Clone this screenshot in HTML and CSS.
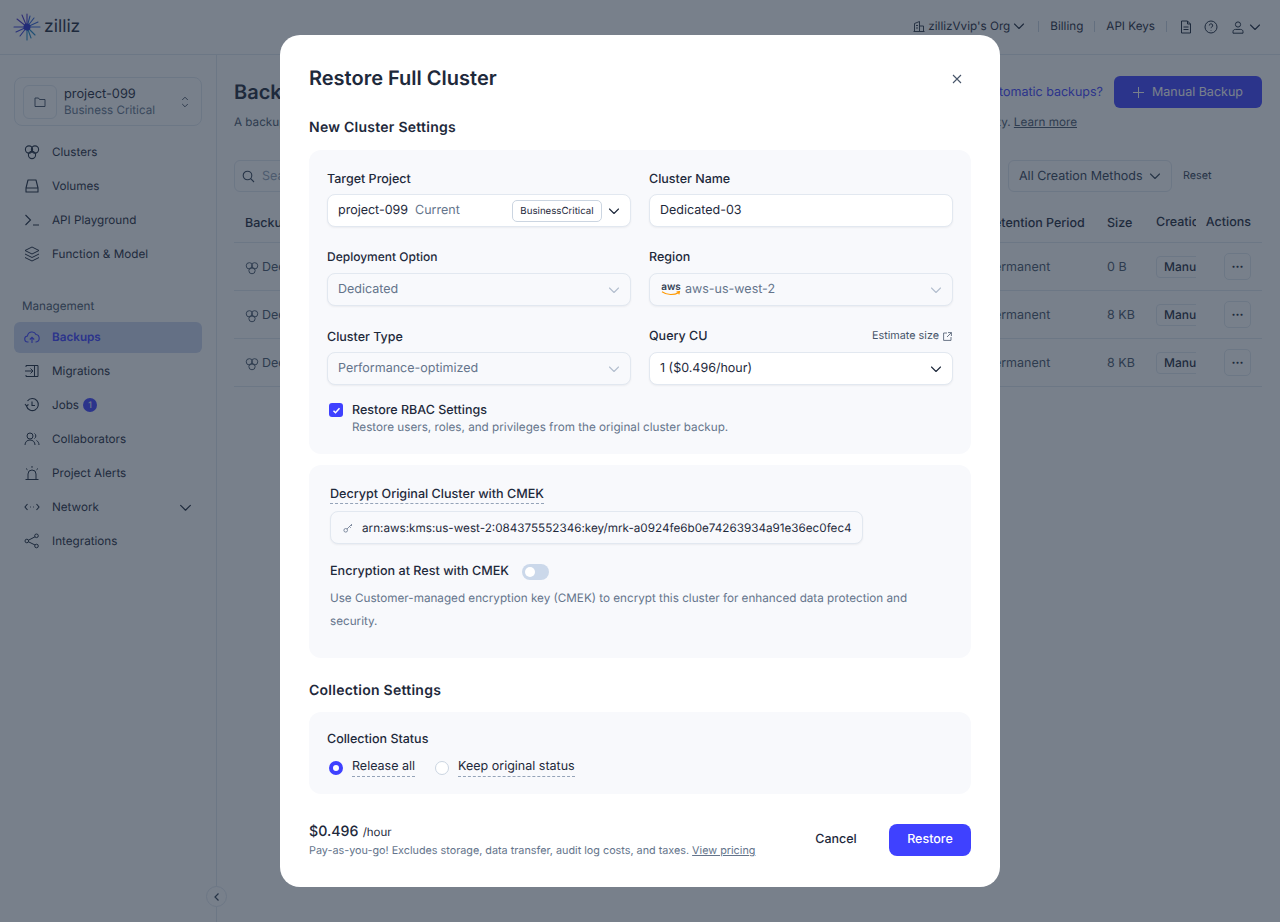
FILE: index.html
```html
<!DOCTYPE html>
<html lang="en">
<head>
    <meta charset="UTF-8">
    <meta name="viewport" content="width=device-width, initial-scale=1.0">
    <title>Zilliz Cloud - Backups</title>
    <link rel="stylesheet" href="styles.css">
</head>
<body>
    <svg class="sprites" width="0" height="0">
        <symbol id="i-chev" viewBox="0 0 12 12"><path d="M1.500 4l4.500 4.500L10.500 4" fill="none" stroke="currentColor" stroke-width="1.100" stroke-linecap="round" stroke-linejoin="round"/></symbol>
        <symbol id="i-clusters" viewBox="0 0 16 16"><g fill="none" stroke="currentColor" stroke-width="1.100"><circle cx="5" cy="5.500" r="3.600"/><circle cx="11" cy="5.500" r="3.600"/><circle cx="8" cy="11" r="3.600"/></g></symbol>
    </svg>

    <header class="topbar">
        <div class="logo">
            <svg width="28" height="28" viewBox="0 0 28 28">
                <g fill="none" stroke-width="1.100" stroke-linecap="round">
                    <path d="M14 14L14 1M14 14L9 2M14 14L4 6" stroke="#4a32c8"/>
                    <path d="M14 14L1 14M14 14L3 19M14 14L7 23" stroke="#3b3fd8"/>
                    <path d="M14 14L14 27M14 14L18 25M14 14L22 22" stroke="#1f86c6"/>
                    <path d="M14 14L27 14M14 14L25 9M14 14L21 5M14 14L17 3" stroke="#2f5fd8"/>
                </g>
                <circle cx="14" cy="14" r="3.500" fill="#2a2fd0"/>
            </svg>
            <span class="logo-text">zilliz</span>
        </div>
        <nav class="top-links">
            <span class="org">
                <svg width="12" height="12" viewBox="0 0 12 12"><path d="M.5 11.500h11M1.500 11V3.500l5-2V11M6.500 6H10.500V11M3 5.500h2M3 8h2" fill="none" stroke="currentColor" stroke-width=".9"/></svg>
                zillizVvip's Org
                <svg class="chev" width="12" height="12"><use href="#i-chev"/></svg>
            </span>
            <i class="sep"></i><span>Billing</span>
            <i class="sep"></i><span>API Keys</span>
            <i class="sep"></i>
            <svg class="top-icon doc" width="14" height="14" viewBox="0 0 14 14"><path d="M2.500 1h6l3 3v9h-9zM8.500 1v3h3M4.500 7h5M4.500 9.500h5" fill="none" stroke="currentColor" stroke-width="1"/></svg>
            <svg class="top-icon" width="14" height="14" viewBox="0 0 14 14"><circle cx="7" cy="7" r="6" fill="none" stroke="currentColor" stroke-width="1"/><path d="M5.300 5.500a1.700 1.700 0 1 1 2.500 1.500c-.6.300-.8.600-.8 1.200M7 10v.6" fill="none" stroke="currentColor" stroke-width="1"/></svg>
            <span class="user">
                <svg width="12" height="13" viewBox="0 0 12 13"><circle cx="6" cy="3.500" r="2.600" fill="none" stroke="currentColor"/><path d="M1 12.200v-1.500c0-1.500 1-2.300 2.500-2.300h5c1.500 0 2.500.8 2.500 2.300v1.500z" fill="none" stroke="currentColor"/></svg>
                <svg class="chev" width="12" height="12"><use href="#i-chev"/></svg>
            </span>
        </nav>
    </header>

    <div class="shell">
        <aside class="sidebar">
            <div class="project-box">
                <span class="project-icon">
                    <svg width="12" height="12" viewBox="0 0 12 12"><path d="M1 2h3.500l1 1.500H11V10.500H1z" fill="none" stroke="currentColor" stroke-width=".9" stroke-linejoin="round"/></svg>
                </span>
                <div class="project-text">
                    <div class="project-name">project-099</div>
                    <div class="project-plan">Business Critical</div>
                </div>
                <svg class="project-arrows" width="8" height="12" viewBox="0 0 10 14"><path d="M1.500 4.500L5 1l3.500 3.500M1.500 9.500L5 13l3.500-3.500" fill="none" stroke="currentColor" stroke-width="1.100"/></svg>
            </div>
            <ul class="nav">
                <li><svg width="16" height="16"><use href="#i-clusters"/></svg>Clusters</li>
                <li><svg width="16" height="16" viewBox="0 0 16 16"><path d="M4 2h8l2 8v4H2v-4zM2 10h12" fill="none" stroke="currentColor" stroke-width="1.100" stroke-linejoin="round"/></svg>Volumes</li>
                <li><svg width="16" height="16" viewBox="0 0 16 16"><path d="M1.500 3l5 5-5 5M9 13h6" fill="none" stroke="currentColor" stroke-width="1.100"/></svg>API Playground</li>
                <li><svg width="16" height="16" viewBox="0 0 16 16"><path d="M8 1l7 3.500L8 8 1 4.500zM1 8l7 3.500L15 8M1 11.500L8 15l7-3.500" fill="none" stroke="currentColor" stroke-width="1" stroke-linejoin="round"/></svg>Function &amp; Model</li>
            </ul>
            <div class="nav-title">Management</div>
            <ul class="nav">
                <li class="active"><svg width="16" height="16" viewBox="0 0 16 16"><path d="M4.500 13H4a3 3 0 0 1-.5-6A4.500 4.500 0 0 1 12 5.500 3.800 3.800 0 0 1 12 13h-.5M8 14V8.500M5.800 10.500L8 8.300l2.200 2.200" fill="none" stroke="currentColor" stroke-width="1.100"/></svg>Backups</li>
                <li><svg width="16" height="16" viewBox="0 0 16 16"><path d="M2 4V2.500h12v11H2V12M1 8h8M6.500 5.500L9 8l-2.500 2.500M10.500 2.500v11" fill="none" stroke="currentColor" stroke-width="1"/></svg>Migrations</li>
                <li><svg width="16" height="16" viewBox="0 0 16 16"><path d="M2.500 9A6 6 0 1 0 3.500 4M1 7l1.500 2L4.500 7.500M8 4.500V8.500h3" fill="none" stroke="currentColor" stroke-width="1.100"/></svg>Jobs <b class="badge">1</b></li>
                <li><svg width="16" height="16" viewBox="0 0 16 16"><circle cx="6" cy="5" r="3" fill="none" stroke="currentColor"/><path d="M1 14c0-3 2-5 5-5s5 2 5 5M10.500 2.500a3 3 0 0 1 0 5M12.500 9.500c1.500.8 2.500 2.500 2.500 4.500" fill="none" stroke="currentColor"/></svg>Collaborators</li>
                <li><svg width="16" height="16" viewBox="0 0 16 16"><path d="M4 14V9a4 4 0 0 1 8 0v5M1.500 14.500h13M8 1v1.800M2 3.500l1.500 1.300M14 3.500l-1.500 1.300" fill="none" stroke="currentColor" stroke-width="1"/></svg>Project Alerts</li>
                <li class="has-arrow"><svg width="16" height="16" viewBox="0 0 16 16"><path d="M3.500 5L1 8l2.500 3M12.500 5L15 8l-2.500 3M6 8h.8M9.200 8h.8" fill="none" stroke="currentColor" stroke-width="1.100"/></svg>Network<svg class="nav-arrow" width="13" height="13"><use href="#i-chev"/></svg></li>
                <li><svg width="16" height="16" viewBox="0 0 16 16"><g fill="none" stroke="currentColor"><circle cx="2.800" cy="8" r="1.800"/><circle cx="12.500" cy="2.800" r="1.800"/><circle cx="12.500" cy="13" r="1.800"/><path d="M4.500 7.200L11 3.800M4.500 8.800L11 12"/></g></svg>Integrations</li>
            </ul>
            <button class="collapse" type="button">
                <svg width="8" height="10" viewBox="0 0 8 10"><path d="M5.500 1.500L2 5l3.500 3.500" fill="none" stroke="currentColor" stroke-width="1.200"/></svg>
            </button>
        </aside>

        <main class="content">
            <div class="page-head">
                <h1>Backups</h1>
                <div class="page-actions">
                    <a class="auto-link">Need automatic backups?</a>
                    <button class="btn-manual" type="button">
                        <svg width="11" height="11" viewBox="0 0 11 11"><path d="M5.500 0v11M0 5.500h11" stroke="currentColor" stroke-width="1"/></svg>
                        Manual Backup
                    </button>
                </div>
            </div>
            <div class="subtitle">
                <span>A backup is a copy of your data.</span>
                <span>Keep it for recovery and availability. <a class="learn">Learn more</a></span>
            </div>
            <div class="filters">
                <div class="search">
                    <svg width="13" height="13" viewBox="0 0 13 13"><circle cx="5.500" cy="5.500" r="4.300" fill="none" stroke="currentColor" stroke-width="1.100"/><path d="M8.700 8.700L12 12" stroke="currentColor" stroke-width="1.100"/></svg>
                    <span>Search</span>
                </div>
                <div class="filter-select">All Creation Methods <svg width="12" height="12"><use href="#i-chev"/></svg></div>
                <a class="reset">Reset</a>
            </div>
            <div class="table">
                <div class="row head">
                    <span class="col-name">Backup Name</span><span class="col-ret">Retention Period</span><span class="col-size">Size</span><span class="col-creation">Creation Method</span><span class="col-act">Actions</span>
                </div>
                <div class="row">
                    <span class="col-name"><svg width="14" height="14"><use href="#i-clusters"/></svg>Dedicated-01</span><span class="col-ret">Permanent</span><span class="col-size">0 B</span><span class="col-creation"><em>Manual</em></span><span class="col-act"><button class="dots" type="button">&middot;&middot;&middot;</button></span>
                </div>
                <div class="row">
                    <span class="col-name"><svg width="14" height="14"><use href="#i-clusters"/></svg>Dedicated-02</span><span class="col-ret">Permanent</span><span class="col-size">8 KB</span><span class="col-creation"><em>Manual</em></span><span class="col-act"><button class="dots" type="button">&middot;&middot;&middot;</button></span>
                </div>
                <div class="row">
                    <span class="col-name"><svg width="14" height="14"><use href="#i-clusters"/></svg>Dedicated-03</span><span class="col-ret">Permanent</span><span class="col-size">8 KB</span><span class="col-creation"><em>Manual</em></span><span class="col-act"><button class="dots" type="button">&middot;&middot;&middot;</button></span>
                </div>
            </div>
        </main>
    </div>

    <div class="overlay">
        <div class="modal">
            <div class="modal-head">
                <h2>Restore Full Cluster</h2>
                <button class="close" type="button">
                    <svg width="10" height="10" viewBox="0 0 10 10"><path d="M1 1l8 8M9 1L1 9" stroke="currentColor" stroke-width="1.100"/></svg>
                </button>
            </div>

            <h3>New Cluster Settings</h3>
            <section class="panel">
                <div class="form-grid">
                    <div class="field">
                        <label>Target Project</label>
                        <div class="input">
                            <span>project-099</span><span class="muted current">Current</span>
                            <span class="tag">BusinessCritical</span>
                            <svg class="caret" width="12" height="12"><use href="#i-chev"/></svg>
                        </div>
                    </div>
                    <div class="field">
                        <label>Cluster Name</label>
                        <div class="input"><span>Dedicated-03</span></div>
                    </div>
                    <div class="field">
                        <label class="label-small">Deployment Option</label>
                        <div class="input disabled">
                            <span>Dedicated</span>
                            <svg class="caret" width="12" height="12"><use href="#i-chev"/></svg>
                        </div>
                    </div>
                    <div class="field">
                        <label class="label-small-gap">Region</label>
                        <div class="input disabled region">
                            <span class="aws">aws<svg width="20" height="5" viewBox="0 0 20 5"><path d="M1 .8c5 3.500 12 3.500 17 .6M15.500 1l3-.5-.6 2.800" fill="none" stroke="#f90" stroke-width="1.100"/></svg></span>
                            <span>aws-us-west-2</span>
                            <svg class="caret" width="12" height="12"><use href="#i-chev"/></svg>
                        </div>
                    </div>
                    <div class="field">
                        <label>Cluster Type</label>
                        <div class="input disabled">
                            <span>Performance-optimized</span>
                            <svg class="caret" width="12" height="12"><use href="#i-chev"/></svg>
                        </div>
                    </div>
                    <div class="field">
                        <label class="label-split">Query CU
                            <a class="estimate">Estimate size
                                <svg width="9" height="9" viewBox="0 0 9 9"><path d="M4 1H.6v7.400H8V5M5 .6h3.400V4M8.400.6L4 5" fill="none" stroke="currentColor" stroke-width=".8"/></svg>
                            </a>
                        </label>
                        <div class="input">
                            <span>1 ($0.496/hour)</span>
                            <svg class="caret" width="12" height="12"><use href="#i-chev"/></svg>
                        </div>
                    </div>
                </div>
                <div class="check-row">
                    <span class="checkbox">
                        <svg width="9" height="9" viewBox="0 0 9 9"><path d="M1.500 4.700l2 2 4-4.400" fill="none" stroke="#fff" stroke-width="1.500"/></svg>
                    </span>
                    <div>
                        <div class="check-title">Restore RBAC Settings</div>
                        <div class="hint">Restore users, roles, and privileges from the original cluster backup.</div>
                    </div>
                </div>
            </section>

            <section class="panel panel-cmek">
                <div class="label-line"><span class="dashed">Decrypt Original Cluster with CMEK</span></div>
                <div class="input key-input">
                    <svg width="10" height="10" viewBox="0 0 10 10"><circle cx="2.700" cy="7.300" r="1.800" fill="none" stroke="currentColor" stroke-width=".8"/><path d="M4 6l5-5M6.500 3.500l1.300 1.300M8 2l1 1" fill="none" stroke="currentColor" stroke-width=".8"/></svg>
                    <span>arn:aws:kms:us-west-2:084375552346:key/mrk-a0924fe6b0e74263934a91e36ec0fec4</span>
                </div>
                <div class="switch-row">
                    <span>Encryption at Rest with CMEK</span>
                    <span class="switch"><i></i></span>
                </div>
                <p class="switch-desc">Use Customer-managed encryption key (CMEK) to encrypt this cluster for enhanced data protection and security.</p>
            </section>

            <h3 class="h3-collection">Collection Settings</h3>
            <section class="panel panel-status">
                <label>Collection Status</label>
                <div class="radio-row">
                    <span class="radio on"></span><span class="dashed">Release all</span>
                    <span class="radio"></span><span class="dashed">Keep original status</span>
                </div>
            </section>

            <footer class="modal-foot">
                <div>
                    <div class="price"><b>$0.496</b> /hour</div>
                    <div class="price-note">Pay-as-you-go! Excludes storage, data transfer, audit log costs, and taxes. <a>View pricing</a></div>
                </div>
                <div class="foot-actions">
                    <button class="btn-cancel" type="button">Cancel</button>
                    <button class="btn-restore" type="button">Restore</button>
                </div>
            </footer>
        </div>
    </div>
</body>
</html>
```

FILE: styles.css
```css
* {
    box-sizing: border-box;
}
html, body {
    height: 100%;
}
body {
    margin: 0;
    font-family: Inter, "Liberation Sans", sans-serif;
    font-size: 12.5px;
    color: #1e293b;
    background-color: #fff;
    overflow: hidden;
    text-rendering: geometricPrecision;
}
button {
    font-family: inherit;
    text-rendering: inherit;
}
ul {
    list-style: none;
    margin: 0;
    padding: 0;
}
.sprites {
    position: absolute;
}

/* top bar */
.topbar {
    height: 55px;
    border-bottom: 1px solid #e2e8f0;
    display: flex;
    align-items: center;
    justify-content: space-between;
    padding: 0 19px 0 13px;
}
.logo {
    display: flex;
    align-items: center;
    gap: 3px;
}
.logo-text {
    font-size: 17.5px;
    line-height: 26px;
    color: #1e293b;
}
.top-links {
    display: flex;
    align-items: center;
    font-size: 11.7px;
    color: #1e293b;
    height: 16px;
    margin-top: -2px;
}
.top-links .sep {
    width: 1px;
    height: 11px;
    background-color: #cbd5e1;
    margin: 0 11px;
}
.org, .user {
    display: flex;
    align-items: center;
    gap: 3px;
}
.user {
    gap: 5px;
    margin-left: 3px;
    margin-top: 2px;
}
.org .chev {
    margin-right: 2px;
}
.top-icon {
    margin-right: 11px;
    margin-top: 2px;
}
.top-icon.doc {
    margin-left: 1px;
}

.shell {
    display: flex;
    height: calc(100% - 55px);
}

/* sidebar */
.sidebar {
    width: 217px;
    flex: none;
    border-right: 1px solid #e2e8f0;
    padding: 22px 14px 0;
    position: relative;
}
.project-box {
    height: 49px;
    border: 1px solid #e2e8f0;
    border-radius: 8px;
    display: flex;
    align-items: center;
    padding: 0 8px;
    margin-bottom: 9px;
}
.project-icon {
    width: 34px;
    height: 34px;
    border: 1px solid #e2e8f0;
    border-radius: 6px;
    display: flex;
    align-items: center;
    justify-content: center;
    margin-right: 7px;
    color: #334155;
}
.project-text {
    flex: 1;
    padding-top: 2px;
}
.project-name {
    font-size: 12.8px;
    line-height: 16px;
    color: #1e293b;
}
.project-plan {
    font-size: 11.6px;
    line-height: 15px;
    color: #64748b;
}
.project-arrows {
    color: #334155;
    margin-right: 4px;
}
.nav li {
    height: 34px;
    display: flex;
    align-items: center;
    padding-left: 10px;
    font-size: 11.7px;
    color: #1e293b;
    gap: 12px;
    position: relative;
}
.nav li svg {
    flex: none;
}
.nav li.active {
    color: #3f41ff;
    font-weight: 600;
    background-color: #ccd6f0;
    border-radius: 6px;
    height: 31px;
    margin-bottom: 1px;
    padding-bottom: 2px;
}
.nav-title {
    font-size: 11.7px;
    line-height: 15px;
    color: #475569;
    padding-left: 8px;
    margin: 28px 0 8px;
}
.badge {
    width: 14px;
    height: 14px;
    border-radius: 50%;
    background-color: #3f41ff;
    color: #fff;
    font-size: 9px;
    font-weight: 400;
    display: flex;
    align-items: center;
    justify-content: center;
    margin-left: -8px;
}
.nav-arrow {
    margin-left: auto;
    margin-right: 10px;
}
.collapse {
    position: absolute;
    right: -11px;
    bottom: 15px;
    width: 21px;
    height: 21px;
    border: 1px solid #e2e8f0;
    border-radius: 50%;
    background-color: #fff;
    color: #334155;
    padding: 0;
    display: flex;
    align-items: center;
    justify-content: center;
}

/* page behind the dialog */
.content {
    flex: 1;
    min-width: 0;
    padding: 21px 18px 0 17px;
}
.page-head {
    display: flex;
    align-items: center;
    justify-content: space-between;
    height: 32px;
}
.page-head h1 {
    margin: 0;
    font-size: 20px;
    font-weight: 600;
    color: #1e293b;
}
.page-actions {
    display: flex;
    align-items: center;
    gap: 11px;
}
.auto-link {
    color: #3f41ff;
}
.btn-manual {
    width: 148px;
    height: 32px;
    border: none;
    border-radius: 6px;
    background-color: #3f41ff;
    color: #fff;
    font-size: 12.5px;
    display: flex;
    align-items: center;
    justify-content: center;
    gap: 8px;
}
.subtitle {
    display: flex;
    justify-content: space-between;
    font-size: 11.7px;
    line-height: 16px;
    color: #475569;
    margin-top: 6px;
    padding-right: 185px;
}
.learn {
    text-decoration: underline;
}
.filters {
    display: flex;
    align-items: center;
    margin-top: 30px;
}
.search {
    width: 300px;
    height: 32px;
    border: 1px solid #e2e8f0;
    border-radius: 6px;
    display: flex;
    align-items: center;
    gap: 7px;
    padding-left: 7px;
    color: #94a3b8;
}
.search svg {
    color: #334155;
}
.filter-select {
    height: 32px;
    width: 164px;
    margin-left: auto;
    border: 1px solid #e2e8f0;
    border-radius: 6px;
    display: flex;
    align-items: center;
    justify-content: space-between;
    padding: 0 10px;
    color: #334155;
}
.reset {
    font-size: 10.8px;
    width: 90px;
    padding-left: 11px;
    color: #334155;
    margin-top: -2px;
}
.table {
    margin-top: 18px;
}
.row {
    height: 48px;
    display: flex;
    align-items: center;
    border-bottom: 1px solid #e2e8f0;
    color: #475569;
}
.row.head {
    height: 33px;
    color: #1e293b;
    font-weight: 500;
    padding-bottom: 8px;
}
.col-name {
    flex: 1;
    padding-left: 11px;
    display: flex;
    align-items: center;
    gap: 3px;
    margin-top: 2px;
}
.col-ret {
    width: 121px;
    white-space: nowrap;
    margin-top: 2px;
}
.col-size {
    width: 49px;
    margin-top: 2px;
}
.col-creation {
    width: 40px;
    margin-right: 10px;
    overflow: hidden;
    white-space: nowrap;
}
.col-creation em {
    display: inline-block;
    font-style: normal;
    font-weight: 500;
    color: #1e293b;
    border: 1px solid #e2e8f0;
    border-radius: 4px;
    padding: 2px 7px;
    font-size: 12px;
    line-height: 16px;
}
.col-act {
    width: 56px;
    display: flex;
    justify-content: flex-end;
    padding-right: 11px;
}
.dots {
    width: 27px;
    height: 27px;
    border: 1px solid #e2e8f0;
    border-radius: 5px;
    background: none;
    padding: 0;
    font-size: 12px;
    font-weight: 700;
    line-height: 20px;
    color: #1e293b;
}

/* dialog */
.overlay {
    position: fixed;
    inset: 0;
    background-color: rgba(30, 44, 62, 0.6);
    display: flex;
    align-items: center;
    justify-content: center;
}
.modal {
    width: 720px;
    height: 852px;
    background-color: #fff;
    border-radius: 20px;
    padding: 28px 29px 32px;
}
.modal-head {
    display: flex;
    align-items: center;
    justify-content: space-between;
    height: 30px;
}
.modal-head h2 {
    margin: 0;
    font-size: 20px;
    line-height: 30px;
    font-weight: 600;
    color: #1e293b;
}
.close {
    border: none;
    background: none;
    padding: 0;
    color: #475569;
    width: 10px;
    height: 10px;
    margin-right: 9px;
    margin-top: 2px;
    display: flex;
}
h3 {
    margin: 25px 0 12px;
    font-size: 14px;
    line-height: 20px;
    font-weight: 600;
    letter-spacing: .25px;
    color: #1e293b;
}
.panel {
    background-color: #f8f9fc;
    border-radius: 12px;
    padding: 19px 18px;
}
.form-grid {
    display: grid;
    grid-template-columns: 304px 304px;
    column-gap: 18px;
    row-gap: 21px;
}
.field label, .panel-status label {
    display: block;
    font-size: 12.5px;
    line-height: 18px;
    font-weight: 500;
    color: #1e293b;
    margin-bottom: 7px;
    padding-top: 2px;
    height: 18px;
}
.field .label-small {
    font-size: 12px;
    padding-top: 0;
}
.field .label-small-gap {
    padding-top: 1px;
}
.field .label-split {
    display: flex;
    justify-content: space-between;
    align-items: center;
    padding-top: 1px;
}
.estimate {
    display: flex;
    align-items: center;
    gap: 4px;
    font-size: 10.8px;
    font-weight: 400;
    color: #475569;
    margin-right: 1px;
    margin-top: -1px;
}
.input {
    height: 33px;
    background-color: #fff;
    border: 1px solid #e2e8f0;
    border-radius: 8px;
    box-shadow: 0 1px 2px rgba(30, 41, 59, .06);
    display: flex;
    align-items: center;
    padding: 0 10px;
    font-size: 12.5px;
    color: #1e293b;
    white-space: nowrap;
}
.input.disabled {
    background-color: #f8f9fc;
    color: #64748b;
}
.input.disabled .caret {
    color: #b4bfce;
}
.input .caret {
    margin-left: auto;
    flex: none;
}
.muted {
    color: #64748b;
}
.current {
    margin-left: 7px;
}
.tag {
    margin-left: auto;
    height: 22px;
    width: 90px;
    text-align: center;
    border: 1px solid #cbd5e1;
    border-radius: 5px;
    font-size: 9.7px;
    line-height: 21px;
}
.tag + .caret {
    margin-left: 6px;
}
.aws {
    display: flex;
    flex-direction: column;
    align-items: center;
    font-size: 10px;
    line-height: 8px;
    font-weight: 600;
    color: #334155;
    margin-right: 4px;
    margin-left: 1px;
}
.check-row {
    display: flex;
    gap: 9px;
    margin: 18px 0 0 2px;
}
.checkbox {
    width: 14px;
    height: 14px;
    flex: none;
    border-radius: 3px;
    background-color: #3f41ff;
    display: flex;
    align-items: center;
    justify-content: center;
}
.check-title {
    font-size: 12.5px;
    line-height: 16px;
    font-weight: 500;
}
.hint {
    font-size: 11.7px;
    line-height: 16px;
    color: #64748b;
}
.panel-cmek {
    margin-top: 11px;
    height: 193px;
    padding: 21px 21px;
}
.label-line {
    font-size: 12.6px;
    font-weight: 500;
    line-height: 18px;
}
.dashed {
    border-bottom: 1px dashed #94a3b8;
    padding-bottom: 1px;
}
.key-input {
    width: 533px;
    margin-top: 7px;
    background-color: #f8f9fc;
    gap: 9px;
    padding-left: 12px;
    font-size: 11.7px;
}
.key-input svg {
    color: #64748b;
    flex: none;
}
.switch-row {
    display: flex;
    align-items: center;
    gap: 13px;
    margin-top: 19px;
    font-size: 12.6px;
    font-weight: 500;
    line-height: 18px;
}
.switch {
    width: 27px;
    height: 16px;
    border-radius: 8px;
    background-color: #cbd8ea;
    padding: 3px;
}
.switch i {
    display: block;
    width: 10px;
    height: 10px;
    border-radius: 50%;
    background-color: #fff;
}
.switch-desc {
    margin: 6px 0 0;
    font-size: 11.7px;
    line-height: 23px;
    color: #64748b;
}
.h3-collection {
    margin: 23px 0 11px;
}
.panel-status {
    padding: 17px 18px 0;
    height: 82px;
}
.panel-status label {
    margin-bottom: 11px;
}
.radio-row {
    display: flex;
    align-items: center;
    font-size: 12.5px;
    line-height: 17px;
    margin-left: 2px;
}
.radio {
    width: 14px;
    height: 14px;
    border-radius: 50%;
    border: 1px solid #cbd5e1;
    background-color: #fff;
    margin-right: 9px;
    flex: none;
}
.radio.on {
    border: 4px solid #3f41ff;
}
.dashed + .radio {
    margin-left: 20px;
}
.modal-foot {
    display: flex;
    justify-content: space-between;
    align-items: center;
    margin-top: 27px;
}
.price {
    font-size: 11.5px;
    line-height: 22px;
}
.price b {
    font-size: 14.2px;
    font-weight: 500;
    margin-right: 1px;
}
.price-note {
    font-size: 10.8px;
    line-height: 15px;
    color: #64748b;
}
.price-note a {
    text-decoration: underline;
}
.foot-actions {
    display: flex;
    align-items: center;
    gap: 19px;
}
.btn-cancel {
    width: 68px;
    height: 32px;
    border: none;
    background: none;
    font-size: 12.5px;
    font-weight: 500;
    color: #1e293b;
}
.btn-restore {
    width: 82px;
    height: 32px;
    border: none;
    border-radius: 8px;
    background-color: #3f41ff;
    color: #fff;
    font-size: 12.5px;
    font-weight: 500;
}
```
